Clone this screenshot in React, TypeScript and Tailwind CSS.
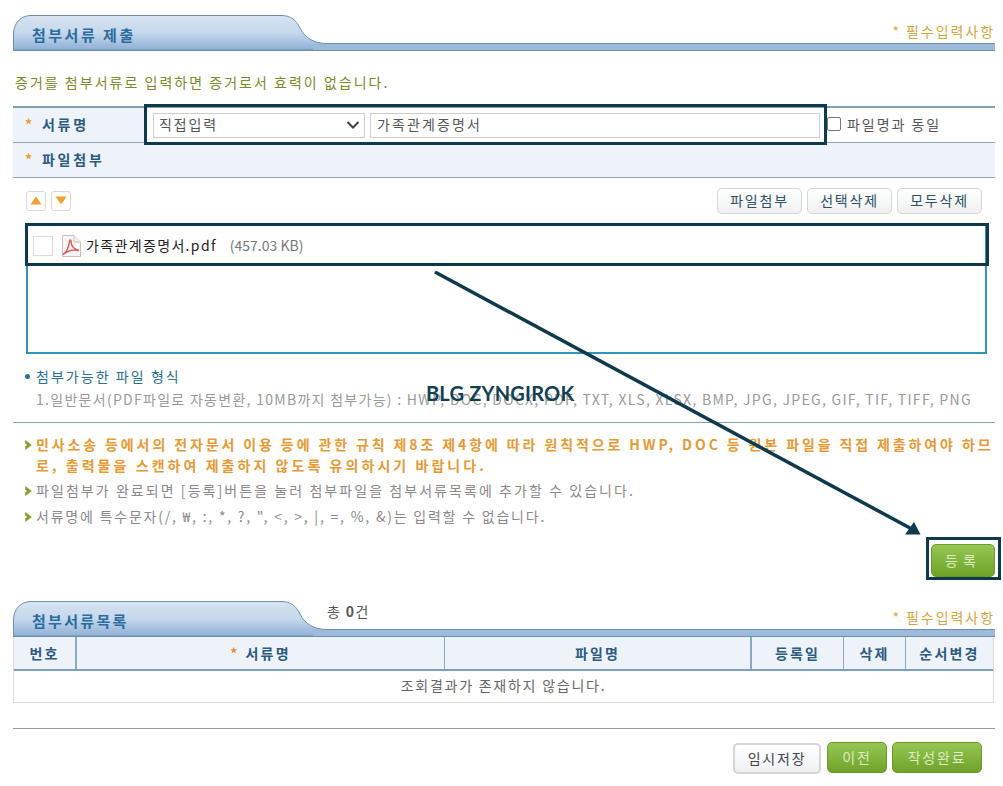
import React from "react";

const font = { fontFamily: '"Noto Sans CJK KR", "Noto Sans", sans-serif' };

function SectionHeader({ id, title, total, titleClass }: { id: string; title: string; total?: boolean; titleClass: string }) {
  return (
    <div className="relative h-[36px] w-[982px]">
      <svg className="absolute left-0 top-0" width="982" height="36" viewBox="0 0 982 36">
        <defs>
          <linearGradient id={id} x1="0" y1="0" x2="0" y2="1">
            <stop offset="0" stopColor="#d6e3f2" />
            <stop offset="0.5" stopColor="#c6d8ec" />
            <stop offset="1" stopColor="#8fb0d6" />
          </linearGradient>
        </defs>
        <path
          d="M0.5 35V19C0.5 8 8 0.5 18 0.5H268C278 0.5 283 5 287 13C292 23 301 28.5 314 28.5H981.5V35Z"
          fill={`url(#${id})`}
          stroke="#6d90b0"
          strokeWidth="1"
        />
        <rect x="300" y="29" width="682" height="6" fill="#9dbadb" />
        <rect x="0" y="35" width="982" height="1" fill="#6f8fae" />
      </svg>
      <div className={`absolute left-[19px] text-[15px] font-bold leading-5 text-[#2a6ca0] ${titleClass}`}>{title}</div>
      {total && (
        <div className="absolute left-[314px] top-[0px] text-[14px] leading-5 tracking-[1.4px] text-[#555]">
          총 <b className="font-bold">0</b>건
        </div>
      )}
      <div className="absolute right-[0px] top-[6px] text-[14px] leading-5 tracking-[1.95px] text-[#d3a63f]">
        <span className="text-[#d9a84a]">*</span> 필수입력사항
      </div>
    </div>
  );
}

function Star() {
  return <span className="mr-[7px] text-[14px] font-bold text-[#e89a2c]">*</span>;
}

function GrayButton({ children, className }: { children: React.ReactNode; className: string }) {
  return (
    <button className={`flex items-center justify-center rounded-[5px] border border-[#d6d6d6] bg-gradient-to-b from-[#ffffff] to-[#eef0f2] pb-[1px] text-[14px] tracking-[1.8px] text-[#2f5166] ${className}`}>
      {children}
    </button>
  );
}

function GreenButton({ children, className }: { children: React.ReactNode; className: string }) {
  return (
    <button className={`flex items-center justify-center rounded-[5px] border border-[#6d9a2e] bg-gradient-to-b from-[#97c653] to-[#6ea326] pb-[1px] text-[14px] tracking-[1.8px] text-[#dcecc4] ${className}`}>
      {children}
    </button>
  );
}

function Arrow({ up }: { up?: boolean }) {
  return (
    <div className="flex h-[20px] w-[20px] items-center justify-center rounded-[3px] border border-[#d8d8d8] bg-white">
      <svg width="12" height="9" viewBox="0 0 12 9">
        <path d={up ? "M6 0.5L11.5 8.5H0.5Z" : "M0.5 0.5H11.5L6 8.5Z"} fill="#f0a12e" />
      </svg>
    </div>
  );
}

function Chevron() {
  return (
    <svg className="mr-[4px] mt-[6px] shrink-0" width="7" height="10" viewBox="0 0 7 10">
      <path d="M0.5 0.5L6.5 5L0.5 9.5V6.5L2.5 5L0.5 3.5Z" fill="#7c9f2d" stroke="#7c9f2d" strokeWidth="0.5" />
    </svg>
  );
}

function PdfIcon() {
  return (
    <svg width="20" height="22" viewBox="0 0 20 22" className="shrink-0">
      <path d="M1.5 0.5H13L19.5 7V21.5H1.5Z" fill="#fbf6f5" stroke="#cdbdbb" />
      <path d="M13 0.5V7H19.5" fill="#efefef" stroke="#cdbdbb" />
      <path
        d="M2 19.5C5 18 8 12 8.5 6.5C8.7 4.5 10 4.5 10 6.5C10 11 13 14 18 15.5C13 14.5 7 15.5 2 19.5Z"
        fill="none"
        stroke="#d9605a"
        strokeWidth="1.5"
      />
    </svg>
  );
}

export default function App() {
  return (
    <div className="relative h-[786px] w-[1003px] overflow-hidden bg-white pl-[13px] pt-[15px]" style={font}>
      <SectionHeader id="tabFirst" title="첨부서류 제출" titleClass="top-[10px] tracking-[2.5px]" />

      <div className="ml-[2px] mt-[21px] h-[19px] text-[14px] leading-5 tracking-[2.02px] text-[#7b8a2a]">
        증거를 첨부서류로 입력하면 증거로서 효력이 없습니다.
      </div>

      {/* form table */}
      <div className="mt-[15px] w-[982px] border-t-2 border-[#84a0b1]">
        <div className="flex h-[35px] items-center border-b border-[#8fa8b8]">
          <div className="flex h-full w-[131px] items-center bg-[#eef3fa] pb-[2px] pl-[12px] text-[14px] font-bold tracking-[2.8px] text-[#2c5a80]">
            <Star />
            서류명
          </div>
          <div className="ml-[9px] flex h-[25px] w-[212px] items-center justify-between border border-[#cfcfcf] bg-white pb-[2px] pl-[5px] pr-[4px] text-[14px] tracking-[1.85px] text-[#555]">
            직접입력
            <svg className="mt-[2px]" width="14" height="8" viewBox="0 0 14 8">
              <path d="M1.5 1L7 6.5L12.5 1" fill="none" stroke="#444" strokeWidth="2" />
            </svg>
          </div>
          <div className="ml-[5px] flex h-[25px] w-[450px] items-center border border-[#cfcfcf] bg-white pb-[2px] pl-[6px] text-[14px] tracking-[2.1px] text-[#555]">
            가족관계증명서
          </div>
          <div className="mb-[2px] ml-[7px] h-[14px] w-[14px] rounded-[2px] border border-[#777] bg-white" />
          <div className="mb-[2px] ml-[6px] text-[14px] tracking-[1.95px] text-[#555]">파일명과 동일</div>
        </div>
        <div className="flex h-[35px] items-center border-b border-[#8fa8b8] bg-[#eef3fa] pb-[1px] pl-[12px] text-[14px] font-bold tracking-[2.8px] text-[#2c5a80]">
          <Star />
          파일첨부
        </div>
      </div>

      {/* toolbar */}
      <div className="ml-[13px] mt-[9px] flex h-[27px] w-[956px] items-center justify-between">
        <div className="flex gap-[5px]">
          <Arrow up />
          <Arrow />
        </div>
        <div className="flex gap-[5px]">
          <GrayButton className="h-[26px] w-[85px]">파일첨부</GrayButton>
          <GrayButton className="h-[26px] w-[85px]">선택삭제</GrayButton>
          <GrayButton className="h-[26px] w-[85px]">모두삭제</GrayButton>
        </div>
      </div>

      {/* file list */}
      <div className="ml-[13px] mt-[10px] h-[130px] w-[961px] border-2 border-[#2e96bd] bg-white">
        <div className="flex h-[40px] items-center pl-[5px]">
          <div className="h-[20px] w-[20px] border border-[#dcdcdc] bg-white" />
          <div className="ml-[8px]">
            <PdfIcon />
          </div>
          <div className="mb-[2px] ml-[5px] text-[14px] tracking-[1.35px] text-[#222]">가족관계증명서.pdf</div>
          <div className="mb-[2px] ml-[13px] text-[14px] text-[#777]">(457.03 KB)</div>
        </div>
      </div>

      {/* formats */}
      <div className="ml-[12px] mt-[12px] flex h-[20px] items-center text-[14px] tracking-[2.05px] text-[#2b6f93]">
        <span className="mr-[6px] h-[5px] w-[5px] rounded-full bg-[#2b6f93]" />
        첨부가능한 파일 형식
      </div>
      <div className="ml-[23px] mt-[3px] h-[20px] whitespace-nowrap text-[14px] leading-5 tracking-[1.285px] text-[#9a9a9a]">
        1.일반문서(PDF파일로 자동변환, 10MB까지 첨부가능) : HWP, DOC, DOCX, PDF, TXT, XLS, XLSX, BMP, JPG, JPEG, GIF, TIF, TIFF, PNG
      </div>
      <div className="mt-[13px] h-px w-[982px] bg-[#84a4b4]" />

      {/* notices */}
      <div className="ml-[12px] mt-[11px] flex w-[982px] whitespace-nowrap text-[14px] font-bold leading-[21px] tracking-[3.05px] text-[#e69a35]">
        <Chevron />
        <div>
          <span className="tracking-[2.88px]">민사소송 등에서의 전자문서 이용 등에 관한 규칙 제8조 제4항에 따라 원칙적으로 HWP, DOC 등 원본 파일을 직접 제출하여야 하므</span>
          <br />
          로, 출력물을 스캔하여 제출하지 않도록 유의하시기 바랍니다.
        </div>
      </div>
      <div className="ml-[12px] mt-[4px] flex h-[24px] items-start text-[14px] leading-5 tracking-[2.06px] text-[#8a8a8a]">
        <Chevron />
        파일첨부가 완료되면 [등록]버튼을 눌러 첨부파일을 첨부서류목록에 추가할 수 있습니다.
      </div>
      <div className="ml-[12px] mt-[2px] flex h-[20px] items-start text-[14px] leading-5 tracking-[1.78px] text-[#8a8a8a]">
        <Chevron />
        서류명에 특수문자(/, ₩, :, *, ?, ", &lt;, &gt;, |, =, %, &amp;)는 입력할 수 없습니다.
      </div>

      <div className="mt-[18px] flex w-[982px] justify-end">
        <GreenButton className="h-[33px] w-[64px] tracking-[5px]">등록</GreenButton>
      </div>

      <div className="mt-[24px]">
        <SectionHeader id="tabSecond" title="첨부서류목록" total titleClass="top-[10px] tracking-[2.3px]" />
      </div>

      {/* list table */}
      <div className="w-[981px] border-b border-[#dcdcdc] border-l border-r">
        <div className="grid h-[34px] grid-cols-[63px_368px_307px_92px_62px_1fr] border-b-2 border-[#7ea0bf] bg-[#eef3fa] text-[14px] font-bold tracking-[2.2px] text-[#2c5a80]">
          <div className="flex items-center justify-center border-r-2 border-[#8aa9c6]">번호</div>
          <div className="flex items-center justify-center border-r border-[#8aa9c6]">
            <span className="mr-[6px] text-[#e08f3a]">*</span>서류명
          </div>
          <div className="flex items-center justify-center border-r-2 border-[#8aa9c6]">파일명</div>
          <div className="flex items-center justify-center border-r border-[#8aa9c6]">등록일</div>
          <div className="flex items-center justify-center border-r border-[#8aa9c6]">삭제</div>
          <div className="flex items-center justify-center">순서변경</div>
        </div>
        <div className="flex h-[31px] items-center justify-center pb-[2px] text-[14px] tracking-[1.75px] text-[#666]">
          조회결과가 존재하지 않습니다.
        </div>
      </div>

      <div className="mt-[25px] h-px w-[982px] bg-[#9a9a9a]" />

      <div className="ml-[720px] mt-[13px] flex w-[249px] items-start">
        <GrayButton className="mt-[1px] h-[31px] w-[88px] border-2 text-[#444]">임시저장</GrayButton>
        <GreenButton className="ml-[6px] h-[31px] w-[60px]">이전</GreenButton>
        <GreenButton className="ml-[5px] h-[31px] w-[90px]">작성완료</GreenButton>
      </div>

      {/* annotations over the screenshot */}
      <div className="absolute left-[144px] top-[104px] h-[41px] w-[683px] border-[3px] border-[#0e3a4c]" />
      <div className="absolute left-[25px] top-[223px] h-[43px] w-[964px] border-[3px] border-[#0e3a4c]" />
      <div className="absolute left-[926px] top-[537px] h-[43px] w-[75px] border-[3px] border-[#0e3a4c]" />
      <svg className="absolute left-0 top-0" width="1003" height="786" viewBox="0 0 1003 786">
        <line x1="435" y1="272" x2="910" y2="528" stroke="#0e3a4c" strokeWidth="3.5" />
        <path d="M920.5 534.5H905L914 522Z" fill="#0e3a4c" />
      </svg>
      <div className="absolute left-[426px] top-[382px] whitespace-nowrap text-[20px] font-bold leading-[22px] tracking-[0.2px] text-[#123f52]" style={{ fontFamily: "Lato, sans-serif" }}>
        BLG ZYNGIROK
      </div>
    </div>
  );
}
